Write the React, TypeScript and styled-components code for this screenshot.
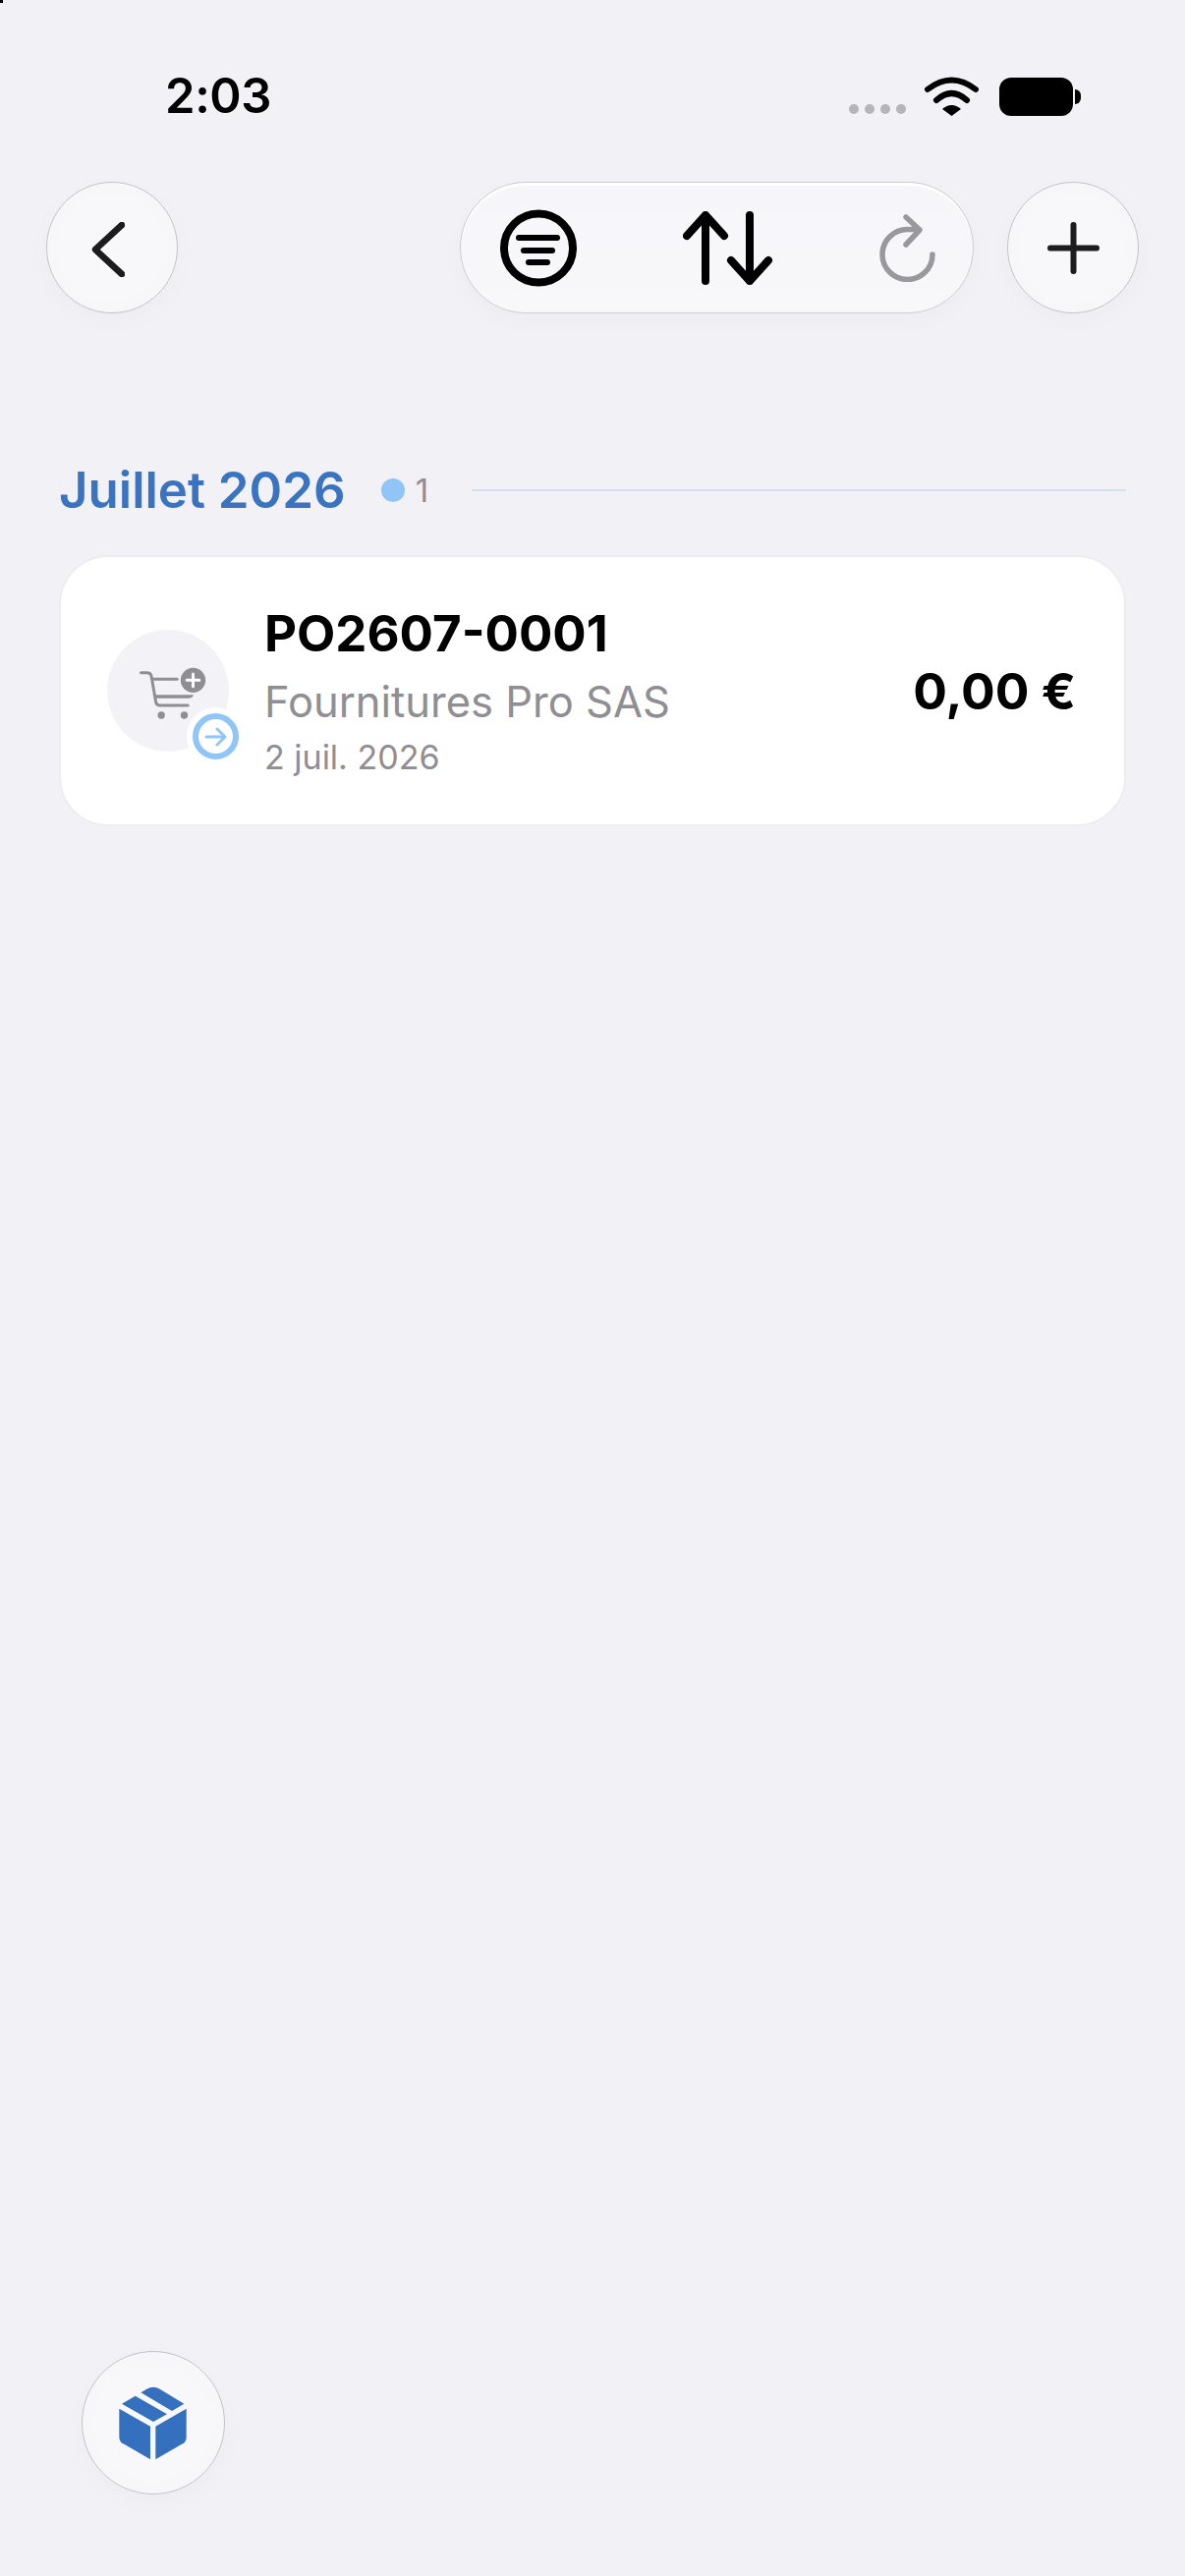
import styled, { createGlobalStyle } from 'styled-components'

const GlobalStyle = createGlobalStyle`
    html, body {
        margin: 0;
        padding: 0;
        background: #f1f1f6;
    }
    * {
        box-sizing: border-box;
    }
`

const Page = styled.div`
    position: relative;
    width: 1206px;
    height: 2622px;
    overflow: hidden;
    background: #f1f1f6;
    font-family: Inter, "Noto Sans", sans-serif;
`

const CornerMark = styled.div`
    position: absolute;
    top: 0;
    left: 0;
    width: 3px;
    height: 3px;
    background: #000;
`

/*------------ Status bar ------------*/

const StatusBar = styled.div`
    height: 185px;
    padding: 69px 106px 0 168px;
    display: flex;
    align-items: flex-start;
    justify-content: space-between;
`

const Time = styled.div`
    font-size: 49px;
    font-weight: 600;
    line-height: 58px;
    letter-spacing: -0.4px;
    color: #000;
`

const StatusIcons = styled.div`
    display: flex;
    align-items: flex-start;
    padding-top: 8px;
`

const SignalDots = styled.div`
    display: flex;
    gap: 6px;
    margin-top: 29px;
    margin-right: 19px;
`

const SignalDot = styled.span`
    width: 10px;
    height: 10px;
    border-radius: 50%;
    background: #b5b5ba;
`

const Battery = styled.div`
    position: relative;
    width: 75px;
    height: 39px;
    margin-top: 2px;
    margin-left: 21px;
    margin-right: 8px;
    border-radius: 12px;
    background: #000;

    &::after {
        content: '';
        position: absolute;
        top: 12px;
        right: -8px;
        width: 6px;
        height: 15px;
        border-radius: 0 8px 8px 0;
        background: #000;
    }
`

/*------------ Toolbar ------------*/

const Toolbar = styled.div`
    padding: 0 47px;
    display: flex;
    align-items: center;
    gap: 34px;
`

const GlassButton = styled.button`
    width: 134px;
    height: 134px;
    padding: 0;
    flex: none;
    display: flex;
    align-items: center;
    justify-content: center;
    border: 1.5px solid #c4c4c8;
    border-radius: 50%;
    background: radial-gradient(circle, #f8f8fb 55%, #f4f4f8 100%);
    box-shadow: 0 8px 20px rgba(120, 120, 140, 0.04);
`

const BackButton = styled(GlassButton)`
    margin-right: auto;
`

const PillGroup = styled.div`
    width: 523px;
    height: 134px;
    padding: 0 38.5px 0 39.5px;
    display: flex;
    align-items: center;
    justify-content: space-between;
    border: 1.5px solid #cdcdd1;
    border-radius: 67px;
    background: linear-gradient(180deg, #f6f6fa 0%, #f8f8fb 100%);
    box-shadow: 0 8px 20px rgba(120, 120, 140, 0.04), inset 0 3px 0 #fff;
`

/*------------ List ------------*/

const Section = styled.section`
    margin-top: 150px;
    padding: 0 60px;
`

const MonthRow = styled.div`
    height: 60px;
    display: flex;
    align-items: center;
`

const MonthTitle = styled.h2`
    margin: 0;
    font-size: 51px;
    font-weight: 600;
    line-height: 60px;
    color: #3a74c0;
`

const CountDot = styled.span`
    width: 24px;
    height: 24px;
    margin-left: 36px;
    border-radius: 50%;
    background: #90c5f8;
`

const Count = styled.span`
    margin-left: 11px;
    font-size: 33px;
    font-weight: 400;
    color: #8e8e93;
`

const MonthLine = styled.div`
    flex: 1;
    height: 2px;
    margin-left: 44px;
    background: #d6dfec;
`

const Card = styled.div`
    height: 276px;
    margin-top: 36px;
    padding: 0 49px 0 47px;
    display: flex;
    align-items: center;
    border: 2px solid #ececf1;
    border-radius: 50px;
    background: #fff;
`

const Avatar = styled.div`
    position: relative;
    width: 124px;
    height: 124px;
    flex: none;
    padding: 4px 0 0 10px;
    display: flex;
    align-items: center;
    justify-content: center;
    border-radius: 50%;
    background: #f2f2f7;
`

const StatusBadge = styled.div`
    position: absolute;
    right: -10px;
    bottom: -8px;
    width: 47px;
    height: 47px;
    display: flex;
    align-items: center;
    justify-content: center;
    border: 6px solid #90c5f8;
    border-radius: 50%;
    background: #fff;
    box-shadow: 0 0 0 6px #fff;
`

const CardText = styled.div`
    margin-left: 36px;
    display: flex;
    flex-direction: column;
`

const OrderRef = styled.div`
    font-size: 51px;
    font-weight: 700;
    line-height: 60px;
    color: #000;
`

const Supplier = styled.div`
    margin-top: 11px;
    font-size: 43.5px;
    font-weight: 400;
    line-height: 56px;
    color: #8e8e93;
`

const OrderDate = styled.div`
    margin-top: 9px;
    font-size: 34px;
    font-weight: 400;
    line-height: 40px;
    color: #8e8e93;
`

const Amount = styled.div`
    margin-left: auto;
    font-size: 51.5px;
    font-weight: 700;
    color: #000;
`

const FloatingButton = styled(GlassButton)`
    position: absolute;
    left: 83px;
    bottom: 83px;
    width: 146px;
    height: 146px;
`

/*------------ Icons ------------*/

const WifiIcon = () => (
    <svg width="55" height="41" viewBox="0 0 55 41">
        <path d="M3 14 Q27.5 -5 52 14" fill="none" stroke="#000" strokeWidth="6" strokeLinecap="round" />
        <path d="M12 25 Q27.5 11 43 25" fill="none" stroke="#000" strokeWidth="6" strokeLinecap="round" />
        <path d="M18 34 Q27.5 26 37 34 L27.5 41 Z" fill="#000" />
    </svg>
)

const ChevronIcon = () => (
    <svg width="34" height="56" viewBox="0 0 34 56" style={{ marginLeft: -8, marginTop: 3 }}>
        <path d="M31 3 L4 28 L31 53" fill="none" stroke="#1c1c1e" strokeWidth="6.5" strokeLinecap="round" strokeLinejoin="round" />
    </svg>
)

const FilterIcon = () => (
    <svg width="78" height="79" viewBox="0 0 78 79">
        <circle cx="39" cy="39.5" r="35" fill="none" stroke="#000" strokeWidth="8" />
        <g stroke="#000" strokeWidth="6" strokeLinecap="round">
            <path d="M19 29 H58" />
            <path d="M24 42 H53" />
            <path d="M29 54 H48" />
        </g>
    </svg>
)

const SortIcon = () => (
    <svg width="92" height="75" viewBox="0 0 92 75">
        <g fill="none" stroke="#000" strokeWidth="8" strokeLinecap="round" strokeLinejoin="round">
            <path d="M23 71 V4 M4 25 L23 4 L42 25" />
            <path d="M68 4 V71 M49 50 L68 71 L87 50" />
        </g>
    </svg>
)

const RedoIcon = () => (
    <svg width="57" height="69" viewBox="0 0 57 69">
        <g fill="none" stroke="#98989d" strokeWidth="5.5" strokeLinecap="round" strokeLinejoin="round">
            <path d="M54 41 A25.5 25.5 0 1 1 28.5 15.5 L40 15.5" />
            <path d="M27 3 L41 16 L27 31" />
        </g>
    </svg>
)

const PlusIcon = () => (
    <svg width="53" height="53" viewBox="0 0 53 53">
        <path d="M26.5 3 V50 M3 26.5 H50" stroke="#1c1c1e" strokeWidth="6" strokeLinecap="round" />
    </svg>
)

const CartIcon = () => (
    <svg width="72" height="55" viewBox="150 170 215 165">
        <g fill="none" stroke="#8e8e93" strokeWidth="9" strokeLinecap="round" strokeLinejoin="round">
            <path d="M160 190 H178 Q190 190 192 202 L205 278 Q207 290 218 290 H303" />
            <path d="M196 210 H270" />
        </g>
        <path d="M204 258 H320 Q318 268 306 268 H206 Z" fill="#8e8e93" />
        <circle cx="222" cy="320" r="11" fill="#8e8e93" />
        <circle cx="292" cy="320" r="11" fill="#8e8e93" />
        <circle cx="319" cy="213" r="38" fill="#8e8e93" />
        <path d="M319 194 V232 M300 213 H338" stroke="#fff" strokeWidth="9" strokeLinecap="round" />
    </svg>
)

const ArrowIcon = () => (
    <svg width="23" height="20" viewBox="0 0 23 20">
        <path d="M2 10 H21 M13 2 L21 10 L13 18" fill="none" stroke="#90c5f8" strokeWidth="3" strokeLinecap="round" strokeLinejoin="round" />
    </svg>
)

const BoxIcon = () => (
    <svg width="71" height="75" viewBox="180 175 213 225" style={{ marginLeft: -2 }}>
        <g fill="#3570bf">
            <path d="M184 243 L279 297 V398 L196 350 Q184 343 184 330 Z" />
            <path d="M389 243 L295 297 V398 L378 350 Q389 343 389 330 Z" />
            <path d="M192 228 L233 204 L330 260 L288 283 Z" />
            <path d="M250 194 L268 183 Q288 172 308 183 L382 228 L345 250 Z" />
        </g>
    </svg>
)

const App = () => {
    return (
        <Page>
            <GlobalStyle />
            <CornerMark />

            <StatusBar>
                <Time>2:03</Time>
                <StatusIcons>
                    <SignalDots>
                        <SignalDot />
                        <SignalDot />
                        <SignalDot />
                        <SignalDot />
                    </SignalDots>
                    <WifiIcon />
                    <Battery />
                </StatusIcons>
            </StatusBar>

            <Toolbar>
                <BackButton aria-label="Retour"><ChevronIcon /></BackButton>
                <PillGroup>
                    <FilterIcon />
                    <SortIcon />
                    <RedoIcon />
                </PillGroup>
                <GlassButton aria-label="Ajouter"><PlusIcon /></GlassButton>
            </Toolbar>

            <Section>
                <MonthRow>
                    <MonthTitle>Juillet 2026</MonthTitle>
                    <CountDot />
                    <Count>1</Count>
                    <MonthLine />
                </MonthRow>

                <Card>
                    <Avatar>
                        <CartIcon />
                        <StatusBadge><ArrowIcon /></StatusBadge>
                    </Avatar>
                    <CardText>
                        <OrderRef>PO2607-0001</OrderRef>
                        <Supplier>Fournitures Pro SAS</Supplier>
                        <OrderDate>2 juil. 2026</OrderDate>
                    </CardText>
                    <Amount>0,00 €</Amount>
                </Card>
            </Section>

            <FloatingButton aria-label="Produits"><BoxIcon /></FloatingButton>
        </Page>
    )
}

export default App
